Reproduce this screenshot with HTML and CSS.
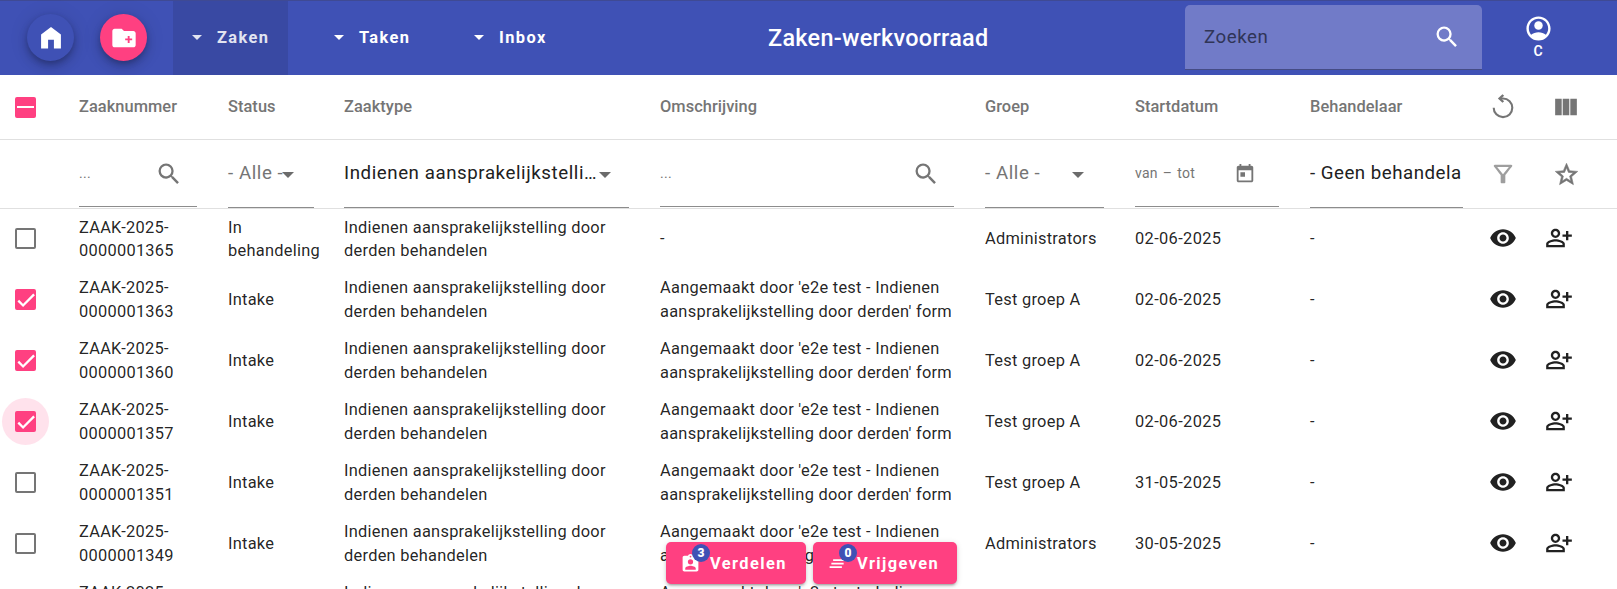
FILE: index.html
```html
<!DOCTYPE html>
<html lang="nl">
<head>
<meta charset="utf-8">
<title>Zaken-werkvoorraad</title>
<link rel="stylesheet" href="styles.css">
</head>
<body>
<svg class="defs" width="0" height="0">
  <symbol id="search" viewBox="0 0 24 24"><path d="M15.5 14h-.79l-.28-.27A6.47 6.47 0 0 0 16 9.5 6.5 6.5 0 1 0 9.5 16c1.61 0 3.09-.59 4.23-1.57l.27.28v.79l5 4.99L20.49 19l-4.99-5zm-6 0C7.01 14 5 11.99 5 9.5S7.01 5 9.5 5 14 7.01 14 9.5 11.99 14 9.5 14z"/></symbol>
  <symbol id="eye" viewBox="0 0 24 24"><path d="M12 4.5C7 4.5 2.73 7.61 1 12c1.73 4.39 6 7.5 11 7.5s9.27-3.11 11-7.5c-1.73-4.39-6-7.5-11-7.5zM12 17c-2.76 0-5-2.24-5-5s2.24-5 5-5 5 2.24 5 5-2.24 5-5 5zm0-8c-1.66 0-3 1.34-3 3s1.34 3 3 3 3-1.34 3-3-1.34-3-3-3z"/></symbol>
  <symbol id="assign" viewBox="0 0 24 24"><path fill-rule="evenodd" d="M9 12c2.21 0 4-1.79 4-4s-1.79-4-4-4-4 1.79-4 4 1.79 4 4 4zm0-6c1.1 0 2 .9 2 2s-.9 2-2 2-2-.9-2-2 .9-2 2-2zm0 7c-2.67 0-8 1.34-8 4v3h16v-3c0-2.66-5.33-4-8-4zm6 5H3v-.99C3.2 16.29 6.3 15 9 15s5.8 1.29 6 2v1zM20 9V6h-2v3h-3v2h3v3h2v-3h3V9z"/></symbol>
  <symbol id="check" viewBox="0 0 24 24"><path d="M1.73 12.91 8.1 19.28 22.79 4.59" fill="none" stroke="#fff" stroke-width="3.1"/></symbol>
</svg>
<header class="toolbar">
  <a class="fab home"><svg class="i28" viewBox="0 0 24 24"><path d="M12 2.500 3.500 9v12h6v-7.500h5V21h6V9z"/></svg></a>
  <a class="fab create"><svg class="i28" viewBox="0 0 24 24"><path fill-rule="evenodd" d="M20 6h-8l-2-2H4c-1.110 0-1.990.89-1.990 2L2 18c0 1.110.89 2 2 2h16c1.110 0 2-.89 2-2V8c0-1.110-.89-2-2-2zm-1 8h-2.200v2.200h-1.600V14H13v-1.600h2.200v-2.200h1.600v2.200H19z"/></svg></a>
  <nav class="menu">
    <a class="menu-item active"><i class="caret"></i>Zaken</a>
    <a class="menu-item taken"><i class="caret"></i>Taken</a>
    <a class="menu-item inbox"><i class="caret"></i>Inbox</a>
  </nav>
  <h1 class="title">Zaken-werkvoorraad</h1>
  <div class="search"><span>Zoeken</span><svg class="i28"><use href="#search"/></svg></div>
  <div class="account"><svg viewBox="0 0 24 24"><path fill-rule="evenodd" d="M12 2C6.480 2 2 6.480 2 12s4.480 10 10 10 10-4.480 10-10S17.520 2 12 2zM18.140 17.120C16.450 15.800 14.320 15 12 15s-4.450.8-6.140 2.120C4.700 15.730 4 13.950 4 12c0-4.420 3.580-8 8-8s8 3.580 8 8c0 1.950-.7 3.730-1.860 5.120z"/><circle cx="12" cy="9.500" r="3.500"/></svg><span>C</span></div>
</header>
<main class="table">
  <div class="row head">
    <div class="cell sel"><span class="box on"><i class="dash"></i></span></div>
    <div class="cell">Zaaknummer</div><div class="cell">Status</div><div class="cell">Zaaktype</div><div class="cell">Omschrijving</div><div class="cell">Groep</div><div class="cell">Startdatum</div><div class="cell">Behandelaar</div>
    <div class="cell act"><svg class="i28" viewBox="0 0 28 28"><g fill="none" stroke="currentColor" stroke-width="2.100"><path d="M4.700 14.700A9.300 9.300 0 1 0 14 5.500H11"/><path d="M14.300 2 10.600 5.500l3.700 3.500" stroke-width="2.400"/></g></svg></div>
    <div class="cell act last"><svg class="i28" viewBox="0 0 24 24"><path d="M2.700 5h5.600v14H2.700zM9.200 5h5.600v14H9.200zM15.700 5h5.600v14h-5.600z"/></svg></div>
  </div>
  <div class="row filters">
    <div class="cell"></div>
    <div class="field small">...<svg class="i28 nr"><use href="#search"/></svg></div>
    <div class="field tall">- Alle -<i class="caret st"></i></div>
    <div class="field tall dark">Indienen aansprakelijkstelli…<i class="caret zt"></i></div>
    <div class="field small">...<svg class="i28 om"><use href="#search"/></svg></div>
    <div class="field tall">- Alle -<i class="caret gr"></i></div>
    <div class="field small date"><span>van</span><span>–</span><span>tot</span><svg class="cal" viewBox="0 0 24 24"><path fill-rule="evenodd" d="M19 3h-1V1h-2v2H8V1H6v2H5c-1.110 0-2 .9-2 2v14c0 1.100.89 2 2 2h14c1.100 0 2-.9 2-2V5c0-1.100-.9-2-2-2zm0 16H5V8h14zM7 10h5v5H7z"/></svg></div>
    <div class="field tall dark clip">- Geen behandela</div>
    <div class="cell act"><svg class="i28 pale" viewBox="0 0 24 24"><path fill-rule="evenodd" d="M7 6h10l-5.010 6.300L7 6zm-2.750-.39C6.270 8.200 10 13 10 13v6c0 .55.45 1 1 1h2c.55 0 1-.45 1-1v-6s3.720-4.800 5.740-7.390A.998.998 0 0 0 18.950 4H5.040c-.83 0-1.300.95-.79 1.610z"/></svg></div>
    <div class="cell act last"><svg class="star" viewBox="0 0 24 24"><path fill-rule="evenodd" d="m22 9.240-7.190-.62L12 2 9.190 8.630 2 9.240l5.460 4.730L5.820 21 12 17.270 18.180 21l-1.630-7.030L22 9.240zM12 15.400l-3.760 2.270 1-4.280-3.320-2.880 4.380-.38L12 6.100l1.710 4.040 4.380.38-3.320 2.880 1 4.280L12 15.400z"/></svg></div>
  </div>
  <div id="rows"></div>
</main>
<div class="bulk">
  <button class="btn verdelen"><span class="glyph"><svg viewBox="0 0 24 24"><path fill-rule="evenodd" d="M19 3h-4.180C14.400 1.840 13.300 1 12 1s-2.400.84-2.820 2H5c-1.100 0-2 .9-2 2v14c0 1.100.9 2 2 2h14c1.100 0 2-.9 2-2V5c0-1.100-.9-2-2-2zm-7 0a1 1 0 1 1 0 2 1 1 0 0 1 0-2zm0 4a3 3 0 1 1 0 6 3 3 0 0 1 0-6zm6 12H6v-1.400c0-2 4-3.100 6-3.100s6 1.100 6 3.100z"/></svg><b class="badge">3</b></span>Verdelen</button>
  <button class="btn vrijgeven"><span class="glyph"><svg viewBox="0 0 24 24"><path d="M5 13h14v-2H5v2zm-2 4h14v-2H3v2zM7 7v2h14V7H7z"/></svg><b class="badge">0</b></span>Vrijgeven</button>
</div>
<script src="rows.js"></script>
</body>
</html>
```
FILE: styles.css
```css
* { box-sizing: border-box; }
html, body { height: 100%; }
body { margin: 0; overflow: hidden; background: #fff; font-family: Roboto, "Noto Sans", sans-serif; font-size: 16.4px; color: rgba(0,0,0,.87); }
svg { fill: currentColor; display: block; flex: none; }
.defs { position: absolute; }
.i28 { width: 28px; height: 28px; }

.toolbar { height: 75px; padding-bottom: 1px; background: #3f51b5; border-top: 1px solid #3f4a94; color: #fff; display: flex; align-items: center; }
.fab { width: 47px; height: 47px; border-radius: 50%; display: flex; align-items: center; justify-content: center; box-shadow: 0 3px 6px -1px rgba(0,0,0,.22), 0 6px 11px rgba(0,0,0,.14), 0 1px 20px rgba(0,0,0,.11); }
.home { margin-left: 27px; background: #3f51b5; }
.create { margin-left: 26px; background: #ff4081; }
.menu { margin: 0 0 -1px 26px; display: flex; height: 74px; }
.menu-item { display: flex; align-items: center; padding-bottom: 1px; font-weight: 700; letter-spacing: 1.42px; font-size: 16.4px; }
.menu-item .caret { margin-right: 15px; }
.active { width: 115px; padding-left: 19px; background: #3949a3; color: #e2e4f1; }
.taken { width: 140px; padding-left: 46px; }
.inbox { padding-left: 46px; width: 131px; }
.caret { width: 0; height: 0; flex: none; border: 5px solid transparent; border-top-color: currentColor; border-bottom: 0; }
.title { margin: 0 0 0 209px; width: 417px; font-size: 23.4px; font-weight: 500; letter-spacing: .3px; line-height: 38px; white-space: nowrap; }
.search { width: 297px; height: 65px; border-radius: 5px 5px 0 0; background: #717bc8; border-bottom: 1px solid #454c85; display: flex; align-items: center; justify-content: space-between; padding: 0 21px 0 19px; color: #fff; }
.search span { font-size: 18.7px; letter-spacing: .55px; color: #303557; }
.account { width: 40px; margin: 0 0 3px 36px; display: flex; flex-direction: column; align-items: center; }
.account svg { width: 29px; height: 29px; }
.account span { font-size: 14px; line-height: 16px; font-weight: 600; }

.row { display: grid; grid-template-columns: 79px 149px 116px 316px 325px 150px 175px 153px 80px 74px; align-items: center; height: 60.93px; line-height: 23.4px; letter-spacing: .27px; white-space: nowrap; }
.head { height: 65px; border-bottom: 1px solid #e0e0e0; font-weight: 500; color: #757575; letter-spacing: .05px; }
.filters { height: 69px; border-bottom: 1px solid #e0e0e0; align-items: start; color: #757575; }
#rows { margin-top: -.5px; }
.sel { padding-left: 15px; }
.box { width: 21px; height: 21px; border: 2px solid #757575; border-radius: 2px; display: flex; align-items: center; justify-content: center; }
.box.on { background: #ff4081; border-color: #ff4081; }
.box svg { width: 18px; height: 18px; }
.halo { width: 47px; height: 47px; border-radius: 50%; background: #ffe2ec; display: flex; align-items: center; justify-content: center; margin-left: -13px; }
.dash { width: 17px; height: 2px; background: #fff; flex: none; }
.act { padding-left: 26px; color: #757575; }
.last { padding-left: 9px; }
.data .act { color: #212121; padding-bottom: 1px; }
.data .last { padding-left: 2px; }
.data .cell:nth-child(7) { letter-spacing: .36px; }
.field { height: 67px; margin-right: 31px; border-bottom: 1px solid #8c8c8c; display: flex; align-items: center; padding-top: 2px; font-size: 14px; }
.row .field:nth-child(3) { margin-right: 30px; }
.tall { height: 68px; font-size: 18.7px; letter-spacing: .57px; padding: 0; }
.tall .caret { border-width: 6px; border-bottom: 0; color: #6b6b6b; margin-top: 2px; }
.dark { color: #212121; }
.nr { margin-left: 64px; }
.st { margin-left: -1px; }
.zt { margin-left: 2px; }
.om { margin-left: 240px; }
.gr { margin-left: 32px; }
.date span { margin-right: 5px; }
.date .cal { width: 22px; height: 22px; margin-left: 34px; }
.clip { margin-right: 0; overflow: hidden; letter-spacing: .5px; }
.filters .act { padding-top: 20px; }
.filters .star { width: 27px; height: 27px; margin: 1px 0 0 1px; stroke: currentColor; stroke-width: .5; }
.pale { color: #9e9e9e; }

.bulk { position: absolute; left: 666px; top: 542px; display: flex; gap: 7px; }
.btn { height: 42px; border: 0; border-radius: 5px; background: #ff4081; color: #fff; font: 700 16.4px Roboto, sans-serif; letter-spacing: 1.42px; display: flex; align-items: center; padding: 0 0 0 14px; box-shadow: 0 3px 2px -2px rgba(0,0,0,.2), 0 2px 3px rgba(0,0,0,.14), 0 1px 6px rgba(0,0,0,.12); }
.verdelen { width: 140px; }
.vrijgeven { width: 144px; }
.glyph { width: 21px; margin-right: 9px; position: relative; }
.glyph svg { width: 21px; height: 21px; }
.badge { position: absolute; left: 12px; top: -9px; width: 18px; height: 18px; border-radius: 50%; background: #3f51b5; font-size: 12px; font-weight: 900; line-height: 18px; letter-spacing: 0; text-align: center; }
```
FILE: rows.js
```js
const cases = [
  ['1365', 'In<br>behandeling', 'Administrators', '02-06-2025', 0],
  ['1363', 'Intake', 'Test groep A', '02-06-2025', 1],
  ['1360', 'Intake', 'Test groep A', '02-06-2025', 1],
  ['1357', 'Intake', 'Test groep A', '02-06-2025', 2],
  ['1351', 'Intake', 'Test groep A', '31-05-2025', 0],
  ['1349', 'Intake', 'Administrators', '30-05-2025', 0],
  ['1348', '', '', '', -1]
];
const box = s => {
  if (s < 0) return '';
  const b = s ? '<span class="box on"><svg><use href="#check"/></svg></span>' : '<span class="box"></span>';
  return s === 2 ? `<span class="halo">${b}</span>` : b;
};
document.getElementById('rows').innerHTML = cases.map(([nr, status, groep, datum, s], i) => `
<div class="row data">
  <div class="cell sel">${box(s)}</div>
  <div class="cell">ZAAK-2025-<br>000000${nr}</div>
  <div class="cell">${status}</div>
  <div class="cell">Indienen aansprakelijkstelling door<br>derden behandelen</div>
  <div class="cell">${i ? "Aangemaakt door 'e2e test - Indienen<br>aansprakelijkstelling door derden' form" : '-'}</div>
  <div class="cell">${groep}</div>
  <div class="cell">${datum}</div>
  <div class="cell">-</div>
  <div class="cell act"><svg class="i28"><use href="#eye"/></svg></div>
  <div class="cell act last"><svg class="i28"><use href="#assign"/></svg></div>
</div>`).join('');
```
